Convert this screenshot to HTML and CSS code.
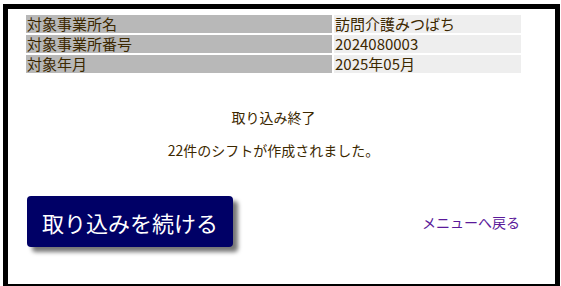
FILE: index.html
```html
<!DOCTYPE html>
<html lang="ja">
<head>
<meta charset="utf-8">
<link rel="stylesheet" href="styles.css">
</head>
<body>
<div class="frame">
  <div class="info">
    <div class="lbl">対象事業所名</div><div class="val">訪問介護みつばち</div>
    <div class="lbl">対象事業所番号</div><div class="val">2024080003</div>
    <div class="lbl">対象年月</div><div class="val">2025年05月</div>
  </div>
  <div class="msg">
    <p class="m1">取り込み終了</p>
    <p class="m2">22件のシフトが作成されました。</p>
  </div>
  <div class="actions">
    <button class="btn" type="button">取り込みを続ける</button>
    <a class="back" href="#">メニューへ戻る</a>
  </div>
</div>
</body>
</html>
```
FILE: styles.css
```css
html, body {
  margin: 0;
  padding: 0;
  background: #fff;
}
body {
  font-family: "Noto Sans CJK JP", "Noto Sans", sans-serif;
  color: #3c2800;
}
.frame {
  margin: 4px 1px 0 3px;
  border: 5px solid #000;
  height: 269px;
  padding: 6px 0 0 18px;
  box-sizing: content-box;
  display: flex;
  flex-direction: column;
}
.info {
  display: grid;
  grid-template-columns: 306px 187px;
  grid-auto-rows: 18px;
  gap: 2px;
  width: 495px;
}
.lbl, .val {
  font-size: 15px;
  line-height: 18px;
  padding-left: 1px;
  white-space: nowrap;
}
.lbl { background: #b8b8b8; }
.val { background: #eeeeee; }
.msg {
  width: 495px;
  text-align: center;
  font-size: 14px;
  margin-top: 35px;
}
.msg p {
  margin: 0;
  line-height: 18px;
}
.msg .m2 { margin-top: 15px; }
.actions {
  width: 493px;
  margin-top: 37px;
  display: flex;
  align-items: center;
  justify-content: space-between;
  padding-left: 1px;
}
.btn {
  width: 206px;
  height: 51px;
  background: #000066;
  color: #fff;
  border: none;
  border-radius: 4px;
  font-family: "Noto Sans CJK JP", sans-serif;
  font-size: 22px;
  font-weight: 400;
  box-shadow: 5px 5px 4px #777;
  padding: 0;
  cursor: pointer;
}
.back {
  font-size: 14px;
  color: #5a1a9a;
  text-decoration: none;
}
```
